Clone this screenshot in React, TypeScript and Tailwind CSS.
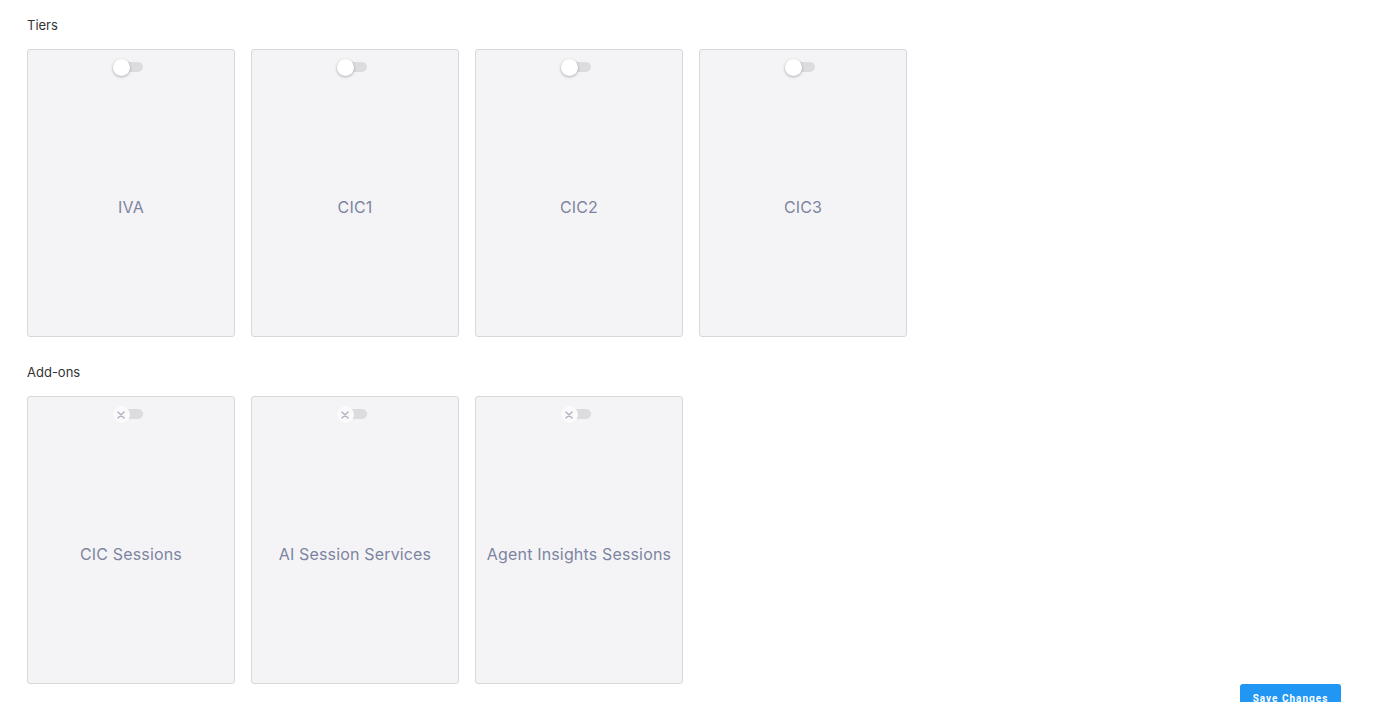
import React from 'react';

type Item = { name: string; disabled?: boolean };

const tiers: Item[] = [{ name: 'IVA' }, { name: 'CIC1' }, { name: 'CIC2' }, { name: 'CIC3' }];
const addons: Item[] = [
  { name: 'CIC Sessions', disabled: true },
  { name: 'AI Session Services', disabled: true },
  { name: 'Agent Insights Sessions', disabled: true },
];

const Toggle: React.FC<{ disabled?: boolean }> = ({ disabled }) => (
  <div className="relative w-[31px] h-[16px] mr-[6px]">
    <div className="absolute left-[3px] top-[3px] w-[27px] h-[10px] rounded-full bg-[#dcdcdf]" />
    <div
      className={`absolute left-0 top-0 w-[17px] h-[17px] rounded-full flex items-center justify-center ${
        disabled ? 'bg-[#fafafb]' : 'bg-white shadow-[0_1px_3px_rgba(0,0,0,0.3)]'
      }`}
    >
      {disabled && (
        <svg width="8" height="8" viewBox="0 0 8 8">
          <path d="M1 1L7 7M7 1L1 7" stroke="#b3b5c4" strokeWidth="1.5" strokeLinecap="round" />
        </svg>
      )}
    </div>
  </div>
);

const Card: React.FC<{ item: Item }> = ({ item }) => (
  <div className="relative w-[208px] h-[288px] rounded-[3px] border border-[#d8d8db] bg-[#f4f4f6] flex flex-col">
    <div className="flex justify-center pt-[9px]">
      <Toggle disabled={item.disabled} />
    </div>
    <div className="flex-1 flex items-center justify-center pt-[2px]">
      <span className="text-[16px] tracking-[0.01em] text-[#7d84a1]">{item.name}</span>
    </div>
  </div>
);

export default function App() {
  return (
    <div className="min-h-[702px] bg-white px-[27px] pt-[16px] font-['Inter',sans-serif] overflow-hidden">
      <div className="text-[13px] leading-[18px] text-[#333]">Tiers</div>
      <div className="mt-[15px] flex gap-[16px]">
        {tiers.map((t) => (
          <Card key={t.name} item={t} />
        ))}
      </div>
      <div className="mt-[26px] text-[13px] leading-[18px] text-[#333]">Add-ons</div>
      <div className="mt-[15px] flex gap-[16px]">
        {addons.map((t) => (
          <Card key={t.name} item={t} />
        ))}
      </div>
      <div className="flex justify-end pr-[5px]">
        <button className="w-[101px] h-[28px] rounded-[3px] bg-[#2196f3] text-white text-[10px] font-bold tracking-[0.1em] pt-[1px] font-['Roboto',sans-serif]">
          Save Changes
        </button>
      </div>
    </div>
  );
}
